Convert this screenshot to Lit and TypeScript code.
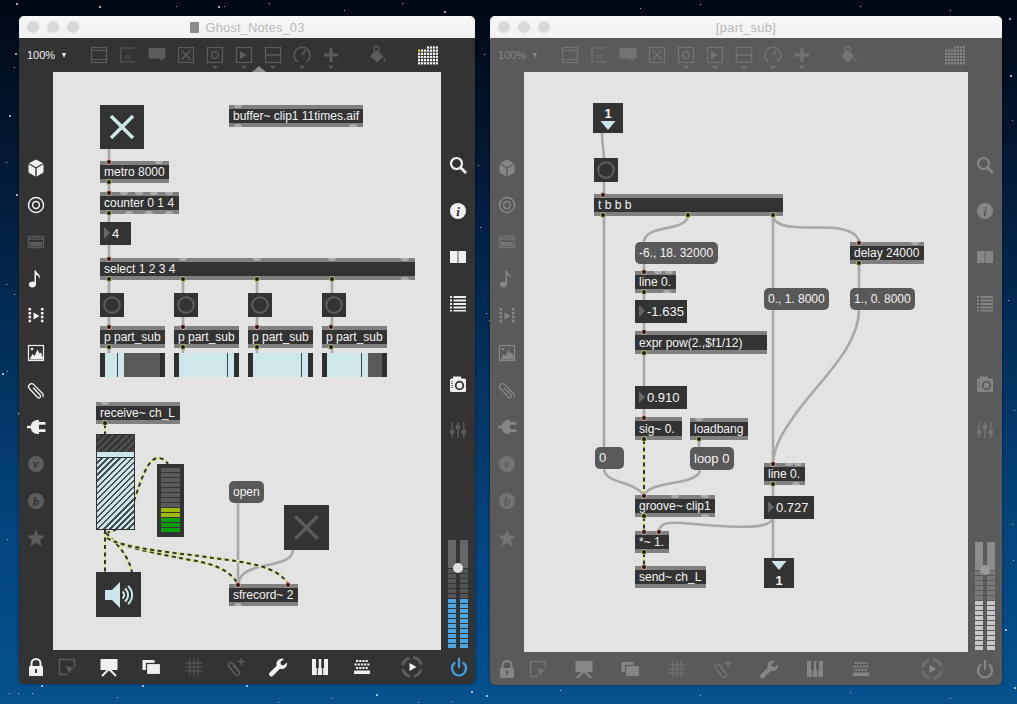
import { LitElement, html, css, svg } from "lit";
import { customElement, property } from "lit/decorators.js";

type Obj = { k: string; x: number; y: number; w: number; h: number; t?: string; fs?: number; it?: number[]; ft?: number[]; ob?: number[]; fb?: number[]; segs?: [number, string][]; line?: number; dim?: boolean };
type Cable = { d: string; sig?: boolean };

const box = (x: number, y: number, w: number, t: string, o: Partial<Obj> = {}): Obj => ({ k: "box", x, y, w, h: 22, t, ...o });
const msg = (x: number, y: number, w: number, t: string, fs = 12, h = 22): Obj => ({ k: "msg", x, y, w, h, t, fs });
const num = (x: number, y: number, w: number, t: string): Obj => ({ k: "num", x, y, w, h: 23, t, fs: 13 });
const btn = (x: number, y: number): Obj => ({ k: "btn", x, y, w: 24, h: 24 });
const tab = (x: number, segs: [number, string][], line: number): Obj => ({ k: "tab", x, y: 353, w: 65, h: 24, segs, line });
const c = (d: string, sig = false): Cable => ({ d, sig });

const D = "dark", L = "light", G = "grey";

const OBJS_1: Obj[] = [
  { k: "toggle", x: 100, y: 105, w: 44, h: 44 },
  box(229, 105, 134, "buffer~ clip1 11times.aif", { ft: [9], fb: [9, 124] }),
  box(100, 161, 69, "metro 8000", { it: [9], ob: [9], ft: [59] }),
  box(100, 192, 79, "counter 0 1 4", { it: [9], ft: [24, 39, 54, 69], ob: [9], fb: [29, 49, 69] }),
  num(100, 222, 31, "4"),
  box(100, 258, 315, "select 1 2 3 4", { it: [9], ft: [83, 157, 232, 305], ob: [9, 83, 157, 232], fb: [305] }),
  ...[100, 174, 248, 322].map((x) => btn(x, 293)),
  ...[100, 174, 248, 322].map((x) => box(x, 326, 65, "p part_sub", { it: [9], ob: [9] })),
  tab(100, [[5, D], [19, L], [36, G], [5, D]], 17),
  tab(174, [[5, D], [55, L], [5, D]], 53),
  tab(248, [[5, D], [55, L], [5, D]], 53),
  tab(322, [[5, D], [41, L], [14, G], [5, D]], 39),
  box(96, 402, 84, "receive~ ch_L", { ft: [9], ob: [9] }),
  { k: "gain", x: 96, y: 434, w: 39, h: 96 },
  { k: "meter", x: 157, y: 464, w: 27, h: 73 },
  msg(229, 481, 35, "open"),
  { k: "toggle", x: 284, y: 505, w: 45, h: 45, dim: true },
  { k: "dac", x: 96, y: 572, w: 45, h: 45 },
  box(229, 584, 69, "sfrecord~ 2", { it: [9, 59], fb: [9] }),
];

const CABLES_1: Cable[] = [
  c("M109 149V161"), c("M109 183V192"), c("M109 214V222"), c("M109 245V258"),
  ...[109, 183, 257, 332].map((x) => c(`M${x} 280V293`)),
  ...[109, 183, 257, 332].map((x) => c(`M${x} 317V326`)),
  ...[109, 183, 257, 332].map((x) => c(`M${x} 348V356`)),
  c("M238 503V584"),
  c("M293 550C292 565 265 563 250 570C243 573 239 578 238 584"),
  c("M105 424V434", true),
  c("M106 533C125 530 130 510 135 498C141 480 148 458 158 458C163 458 166 461 168 464", true),
  c("M105 530V572", true),
  c("M106 533C118 545 128 555 132 572", true),
  c("M107 538C125 548 160 554 180 558C200 562 226 564 238 584", true),
  c("M107 538C125 549 180 553 213 558C245 562 278 566 288 584", true),
];

const OBJS_2: Obj[] = [
  { k: "inlet", x: 593, y: 103, w: 30, h: 30, t: "1" },
  btn(594, 158),
  box(594, 194, 189, "t b b b", { it: [9], ob: [9, 94, 179] }),
  msg(635, 242, 83, "-6., 18. 32000"),
  box(850, 242, 74, "delay 24000", { it: [9], ft: [65], ob: [9] }),
  box(635, 271, 41, "line 0.", { it: [9], ft: [23, 34], ob: [9], fb: [32] }),
  num(635, 300, 52, "-1.635"),
  msg(764, 288, 65, "0., 1. 8000"),
  msg(850, 288, 65, "1., 0. 8000"),
  box(635, 331, 132, "expr pow(2.,$f1/12)", { it: [9], ob: [9], h: 23 }),
  num(635, 386, 52, "0.910"),
  box(635, 417, 47, "sig~ 0.", { it: [9], ob: [9], h: 23 }),
  box(690, 418, 58, "loadbang", { ft: [9], ob: [9] }),
  msg(595, 447, 29, "0", 13),
  msg(690, 447, 44, "loop 0", 13, 23),
  box(764, 463, 41, "line 0.", { it: [9], ft: [25, 34], ob: [9], fb: [32] }),
  num(764, 496, 50, "0.727"),
  box(635, 495, 80, "groove~ clip1", { it: [9], ft: [40, 70], ob: [9], fb: [70] }),
  box(635, 531, 34, "*~ 1.", { it: [9, 24], ob: [9] }),
  box(635, 566, 71, "send~ ch_L", { it: [9] }),
  { k: "outlet", x: 764, y: 558, w: 30, h: 30, t: "1" },
];

const CABLES_2: Cable[] = [
  c("M602 133C602 145 604 150 604 158"), c("M604 182V194"), c("M604 216V447"),
  c("M604 469C605 484 632 480 644 495"),
  c("M688 216C686 232 645 224 644 242"),
  c("M773 216V463"),
  c("M773 216C775 232 815 226 835 228C850 230 858 234 859 242"),
  c("M644 264V271"), c("M644 293V300"), c("M644 323V331"), c("M644 354V386"), c("M644 409V417"),
  c("M699 440V447"), c("M700 470C698 486 650 480 644 495"),
  c("M859 264V288"),
  c("M859 310C859 345 823 378 800 408C785 428 774 445 773 463"),
  c("M773 485V496"),
  c("M773 518C770 530 735 527 705 525C680 523 660 519 659 531"),
  c("M773 518V558"),
  c("M644 440V495", true), c("M644 517V531", true), c("M644 553V566", true),
];

const frame = svg`<rect x="4.5" y="4.5" width="15" height="15" fill="none" stroke="currentColor" stroke-width="1.2"/>`;
const ICONS: Record<string, unknown> = {
  cube: svg`<path fill="currentColor" d="M12 3.5l7 3.8-7 3.9-7-3.9zM4.5 8.3l6.8 3.9v8.3l-6.8-4zM19.5 8.3l-6.8 3.9v8.3l6.8-4z"/>`,
  target: svg`<g fill="none" stroke="currentColor" stroke-width="1.5"><circle cx="12" cy="12" r="7.5"/><circle cx="12" cy="12" r="3.4"/></g>`,
  bar: svg`<g fill="none" stroke="currentColor" stroke-width="1.3"><path d="M4.5 6.5h15v11h-15zM4.5 9h15"/></g><rect x="6" y="12" width="12" height="4" fill="currentColor"/>`,
  note: svg`<path fill="currentColor" d="M10.5 3.5h1.5c.4 3 5 3.8 4 8.6-.7-2.300-2.200-3.500-4-4V17.500a3.600 3 0 1 1-1.500-2.400z"/>`,
  playbar: svg`<path fill="currentColor" d="M9.500 8.500l6 3.500-6 3.500zM4.500 4h2.600v2.500H4.500zM4.500 7.900h2.600v2.500H4.500zM4.500 11.800h2.600v2.500H4.500zM4.500 15.700h2.600v2.500H4.500zM16.900 4h2.600v2.500h-2.600zM16.900 7.900h2.600v2.500h-2.600zM16.900 11.800h2.600v2.500h-2.600zM16.900 15.700h2.600v2.500h-2.600z"/>`,
  image: svg`<rect x="4.500" y="4.500" width="15" height="15" fill="none" stroke="currentColor" stroke-width="1.200"/><path fill="currentColor" d="M5.500 18.500l3-5.500 2 2 3-6.500 2 4 1.500-1 2.500 7z"/><circle cx="8" cy="8" r="1.300" fill="currentColor"/>`,
  clip: svg`<path fill="none" stroke="currentColor" stroke-width="1.300" d="M9 9.500l7.200 7.700a1.700 1.700 0 0 1-2.500 2.300L5.500 10.800a3 3 0 0 1 4.300-4.200L18.500 15.500a3.800 3.800 0 0 1 .5 3.500"/>`,
  plug: svg`<path fill="currentColor" d="M3 10.800h3.800a6.500 6.500 0 0 1 6.400-5.800H15v14h-1.800a6.500 6.500 0 0 1-6.400-5.800H3zM15 7h6.500v2.800H15zM15 14.200h6.500V17H15z"/>`,
  vst: svg`<circle cx="12" cy="12" r="8" fill="currentColor"/><text x="12" y="16" text-anchor="middle" class="glyph" fill="var(--bar)">v</text>`,
  bp: svg`<circle cx="12" cy="12" r="8" fill="currentColor"/><text x="12" y="16.500" text-anchor="middle" class="glyph" fill="var(--bar)">b</text>`,
  star: svg`<path fill="currentColor" d="M12 3.500l2.500 5.700 6.200.6-4.700 4.100 1.400 6.100-5.400-3.200-5.400 3.200 1.400-6.100-4.700-4.100 6.200-.6z"/>`,
  search: svg`<circle cx="10.500" cy="10.500" r="5.500" fill="none" stroke="currentColor" stroke-width="2.200"/><path d="M14.500 14.500l5.500 5.500" stroke="currentColor" stroke-width="2.800"/>`,
  info: svg`<circle cx="12" cy="12" r="8" fill="currentColor"/><text x="12" y="17" text-anchor="middle" class="glyph" fill="var(--bar)">i</text>`,
  book: svg`<path fill="currentColor" d="M4 6h7.600v12H4zM12.400 6H20v12h-7.600z"/>`,
  list: svg`<path fill="currentColor" d="M4 5h2v2H4zM7.500 5H20v2H7.500zM4 8.500h2v2H4zM7.500 8.500H20v2H7.500zM4 12h2v2H4zM7.500 12H20v2H7.500zM4 15.500h2v2H4zM7.500 15.500H20v2H7.500zM4 19h2v1.500H4zM7.500 19H20v1.500H7.500z"/>`,
  camera: svg`<rect x="4" y="6.500" width="16" height="13.500" rx="1.500" fill="currentColor"/><rect x="7" y="4.500" width="8" height="3" fill="currentColor"/><circle cx="13.500" cy="13.500" r="3.800" fill="none" stroke="var(--bar)" stroke-width="1.800"/><path d="M6 9v8" stroke="var(--bar)" stroke-width="1.200" stroke-dasharray="1 1"/>`,
  mixer: svg`<path fill="currentColor" d="M5.500 4h1.400v16H5.500zM11.300 4h1.400v16h-1.400zM17.100 4h1.400v16h-1.400zM4 12h4.400v4H4zM9.800 7h4.400v4H9.800zM15.600 12H20v4h-4.400z"/>`,
  power: svg`<path fill="none" stroke="currentColor" stroke-width="2.300" stroke-linecap="round" d="M7.500 8a7 7 0 1 0 9 0M12 4v8"/>`,
  lock: svg`<path fill="none" stroke="currentColor" stroke-width="2" d="M7.500 11V8.500a4.500 4.500 0 0 1 9 0V11"/><rect x="5" y="11" width="14" height="10" rx="1" fill="currentColor"/><rect x="11" y="14" width="2" height="4" fill="var(--bar)"/>`,
  cursor: svg`<path fill="none" stroke="currentColor" stroke-width="1.500" d="M12 19.500H4.500v-15h15V12"/><path fill="currentColor" d="M10.500 10.500l9 3-3.500 1.500-1.500 4z"/>`,
  present: svg`<rect x="3.500" y="4" width="17" height="11" fill="currentColor"/><path stroke="currentColor" stroke-width="2" d="M12 14L5 21M12 14l7 7"/>`,
  windows: svg`<rect x="3.500" y="5" width="12" height="10" fill="currentColor"/><rect x="7.500" y="8.500" width="14" height="11" fill="currentColor" stroke="var(--bar)" stroke-width="1.200"/>`,
  grid: svg`<path stroke="currentColor" stroke-width="1" fill="none" d="M8 3.500v17M12 3.500v17M16 3.500v17M3.500 8h17M3.500 12h17M3.500 16h17"/>`,
  clipplus: svg`<path fill="none" stroke="currentColor" stroke-width="1.500" d="M16 18L9 8.500a2.500 2.500 0 0 0-4 3L11.500 20a2.500 2.500 0 0 0 4-2.500L9 10"/><path stroke="currentColor" stroke-width="1.500" d="M17 3v7M13.500 6.500h7"/>`,
  wrench: svg`<path fill="currentColor" d="M21 7.500l-3.500 3-2.500-.8-.6-2.500L18 4a5.500 5.500 0 0 0-7.300 6.700L3.700 17.500a2.300 2.300 0 0 0 3.300 3.300l6.900-7A5.500 5.500 0 0 0 21 7.500z"/>`,
  piano: svg`<rect x="4" y="4" width="16" height="16" fill="currentColor"/><path stroke="var(--bar)" stroke-width="1" d="M9.300 12v8M14.700 12v8"/><path fill="var(--bar)" d="M8 4h2.800v9H8zM13.200 4H16v9h-2.800z"/>`,
  keys: svg`<path fill="currentColor" d="M6 5h2.200v2H6zM9.200 5h2.200v2H9.200zM12.400 5h2.200v2h-2.200zM15.600 5h2.200v2h-2.200zM4.500 8.500h2.200v2H4.500zM7.700 8.500h2.200v2H7.700zM10.900 8.500h2.200v2h-2.200zM14.100 8.500h2.200v2h-2.200zM17.300 8.500h2.200v2h-2.200zM6 12h2.200v2H6zM9.200 12h2.200v2H9.200zM12.400 12h2.200v2h-2.200zM15.600 12h2.200v2h-2.200zM4 15.500h16v3.500H4z"/>`,
  dial: svg`<g fill="none" stroke="var(--dim)" stroke-width="3"><path d="M13 2.600a9.500 9.500 0 0 1 8.200 7M21 14.500a9.500 9.500 0 0 1-7.500 7M10 21.300a9.500 9.500 0 0 1-7.300-7.300M2.800 10A9.500 9.500 0 0 1 9.500 3"/></g><path fill="var(--on)" d="M9.500 8l7 4-7 4z"/>`,
  patcher: svg`${frame}<path stroke="currentColor" stroke-width="1.200" d="M4.500 7.500h15M4.500 16.500h15"/>`,
  msgbox: svg`<path fill="none" stroke="currentColor" stroke-width="1.200" d="M19 5H5v14h14"/><text x="12" y="16" text-anchor="middle" class="mini" fill="currentColor">m</text>`,
  comment: svg`<path fill="currentColor" d="M3.500 5h17v10.500h-3v3l-3.500-3H3.500z"/>`,
  xbox: svg`${frame}<path stroke="currentColor" stroke-width="1.500" d="M7.500 7.500l9 9M16.500 7.500l-9 9"/>`,
  ringbox: svg`${frame}<circle cx="12" cy="12" r="3.500" fill="none" stroke="currentColor" stroke-width="1.500"/>`,
  playbox: svg`${frame}<path fill="currentColor" d="M8 8l7 4-7 4z"/>`,
  sliderbox: svg`${frame}<path stroke="currentColor" stroke-width="1.500" d="M4.500 12h15"/>`,
  dialsm: svg`<path fill="none" stroke="currentColor" stroke-width="1.500" d="M7.500 18.800a8 8 0 1 1 9 0M12 12l3.500-5"/>`,
  plus: svg`<path stroke="currentColor" stroke-width="3" d="M12 5v14M5 12h14"/>`,
  paint: svg`<path fill="currentColor" d="M11.500 7l7 6.500-6.500 6-7-6.500zM19.500 15c1.500 2 1.500 3.500 0 3.500s-1.500-1.500 0-3.500z"/><path fill="none" stroke="currentColor" stroke-width="1.300" d="M9 10V6a2.500 2.500 0 0 1 5 0v3"/>`,
};

const icon = (n: string) => html`<svg class="ic" viewBox="0 0 24 24">${ICONS[n]}</svg>`;

const dotsGrid = svg`${Array.from({ length: 6 }, (_, r) =>
  Array.from({ length: 7 }, (_, col) => {
    if (r === 0 && col < 3) return null;
    return svg`<rect x=${col * 3} y=${r * 3.2} width="2.200" height="2.300" fill=${r === 1 && col === 0 ? "var(--accent)" : "var(--dots)"}/>`;
  })
)}`;

@customElement("max-window")
class MaxWindow extends LitElement {
  @property({ attribute: false }) data: any = {};
  static styles = css`
    :host {
      position: absolute;
      display: flex;
      flex-direction: column;
      box-sizing: border-box;
      font-family: "Liberation Sans", Arial, sans-serif;
      border-radius: 5px;
      overflow: hidden;
      --bar: #333333;
      --on: #f0f0f0;
      --off: #5c5c5c;
      --dim: #5c5c5c;
      --power: #3d9ee0;
      --accent: #d8d820;
      --dots: #f0f0f0;
      --knob: #e0e0e0;
      --solid: #666666;
      --seg: #555555;
      --lit: #4aa6e6;
      --g1: 7px;
      --g2: 18.2px;
      --g3: 26px;
      --g4: 23px;
      --foot: 34px;
      --track: 0.1px;
      background: var(--bar);
      box-shadow: 0 0 3px rgba(0, 0, 0, 0.5);
    }
    :host(.w2) {
      --bar: #5a5a5a;
      --on: #868686;
      --off: #747474;
      --dim: #707070;
      --power: #868686;
      --accent: #808080;
      --dots: #868686;
      --knob: #9a9a9a;
      --solid: #8c8c8c;
      --seg: #7a7a7a;
      --lit: #c8c8c8;
      --g1: 7px;
      --g2: 22.2px;
      --g3: 47px;
      --g4: 29px;
      --foot: 33px;
      --track: 0.25px;
    }
    .ic { width: 24px; height: 24px; display: block; }
    .glyph { font: italic bold 13px "Liberation Serif", serif; }
    .mini { font: italic 9px "Liberation Serif", serif; }
    .title {
      height: 22px;
      flex: none;
      display: grid;
      grid-template-columns: 1fr auto 1fr;
      align-items: center;
      background: linear-gradient(#f8f8f8, #f1f1f1);
      color: #b9b9b9;
      font-size: 13px;
    }
    .lights { display: flex; gap: 8px; margin-left: 8px; }
    .lights i { width: 12px; height: 12px; border-radius: 50%; background: #d9d9d9; display: block; }
    .name { display: flex; align-items: center; gap: 7px; letter-spacing: var(--track); }
    .doc { width: 9px; height: 11px; background: #8c8c8c; border-radius: 1px; display: block; }
    .toolbar {
      height: 34px;
      flex: none;
      display: flex;
      position: relative;
      color: var(--off);
    }
    .zoom {
      width: 65.5px;
      box-sizing: border-box;
      padding: 11px 0 0 8px;
      font-size: 11px;
      line-height: 13px;
      color: var(--on);
      display: flex;
      gap: 7px;
    }
    .zoom i {
      display: block;
      margin-top: 4px;
      width: 0;
      height: 0;
      border-left: 2.500px solid transparent;
      border-right: 2.500px solid transparent;
      border-top: 5px solid var(--on);
    }
    .tool {
      width: 29px;
      flex: none;
      position: relative;
      display: flex;
      justify-content: center;
      padding-top: 5px;
      box-sizing: border-box;
    }
    .tool.drop::after {
      content: "";
      position: absolute;
      top: 28px;
      left: 11.500px;
      border-left: 3px solid transparent;
      border-right: 3px solid transparent;
      border-top: 3px solid var(--off);
    }
    .paint { margin-left: 17px; }
    .dots { margin-left: auto; padding: 8px 37px 0 0; }
    .dots svg { width: 20px; height: 19px; display: block; }
    .notch {
      position: absolute;
      left: 233px;
      bottom: 0;
      border-left: 7px solid transparent;
      border-right: 7px solid transparent;
      border-bottom: 6px solid #8c8c8c;
    }
    .mid { flex: 1; display: flex; min-height: 0; }
    .rail { width: 34px; flex: none; display: flex; flex-direction: column; align-items: center; color: var(--off); }
    .rail.left { padding-top: 77px; }
    .rail.left .cell { height: 37px; }
    .rail.right { padding-top: 70px; }
    .rail.right .cell { height: 46px; }
    .cell { display: flex; align-items: center; justify-content: center; flex: none; }
    .on { color: var(--on); }
    .camera { margin-top: 35px; }
    .meter {
      margin-top: auto;
      margin-bottom: 2px;
      position: relative;
      display: flex;
      gap: 4px;
    }
    .col { width: 8px; display: flex; flex-direction: column; gap: 1px; }
    .solid { height: 28px; background: var(--solid); }
    .seg { height: 4px; background: var(--seg); }
    .seg.lit { background: var(--lit); }
    .knob {
      position: absolute;
      left: 5px;
      top: 23px;
      width: 10px;
      height: 10px;
      border-radius: 50%;
      background: var(--knob);
    }
    .canvas { flex: 1; background: #e3e3e3; position: relative; }
    .cables { position: absolute; left: 0; top: 0; width: 100%; height: 100%; }
    .wire { fill: none; stroke: #a8a8a8; stroke-width: 2.600; }
    .sig { fill: none; stroke: #dbe5a2; stroke-width: 3; }
    .sigdash { fill: none; stroke: #333333; stroke-width: 2; stroke-dasharray: 4 3.500; }
    .o {
      position: absolute;
      box-sizing: border-box;
      background: #333333;
      color: #f3f3f3;
      font-size: 12px;
      line-height: 14px;
      display: flex;
      align-items: center;
      padding-left: 4px;
      white-space: nowrap;
    }
    .box { border-top: 4px solid #808080; border-bottom: 4px solid #808080; }
    .msg { background: #595959; border-radius: 5px; }
    .num { padding-left: 12px; font-size: 13px; }
    .num::before {
      content: "";
      position: absolute;
      left: 4px;
      top: 5px;
      border-top: 6.500px solid transparent;
      border-bottom: 6.500px solid transparent;
      border-left: 6px solid #666666;
    }
    .p { position: absolute; box-sizing: border-box; display: block; }
    .pi, .po { width: 6px; height: 6px; border-radius: 50%; background: #1f1f1f; }
    .pi { top: -6px; border: 1px solid #e0a59c; }
    .po { bottom: -6px; border: 1px solid #b9c566; }
    .ft, .fb { width: 8px; height: 3px; background: #ababab; }
    .ft { top: -4px; border-radius: 0 0 4px 4px; }
    .fb { bottom: -4px; border-radius: 4px 4px 0 0; }
    .graphic { padding: 0; justify-content: center; }
    .graphic svg { display: block; width: 100%; height: 100%; }
    .tab { background: none; padding: 0; align-items: stretch; }
    .dark { background: #2f2f2f; }
    .light { background: #cfe6ea; }
    .grey { background: #595959; }
    .tabline { position: absolute; top: 0; bottom: 0; width: 1px; background: #2f4a50; }
    .gain { flex-direction: column; align-items: stretch; padding: 0; border: 1px solid #333333; background: #333333; }
    .gtop {
      height: 17px;
      flex: none;
      background: repeating-linear-gradient(135deg, #4c4c4c 0 3px, #333333 3px 5px);
    }
    .gstrip { height: 5px; flex: none; background: #cde5e8; border-bottom: 1px solid #333333; }
    .gbody {
      flex: 1;
      background: repeating-linear-gradient(135deg, #cfe4e6 0 2.600px, #3f5053 2.600px 4.300px);
    }
    .vu { flex-direction: column; align-items: stretch; gap: 1px; padding: 3.500px 4px 0; }
    .vu i { height: 4px; display: block; background: #5a5a5a; }
    .vu i.y { background: #a0b800; }
    .vu i.g { background: #0ba00b; }
    .port-note { font-weight: 700; font-size: 13px; }
    .foot {
      height: var(--foot);
      flex: none;
      display: flex;
      align-items: center;
      padding-left: 5px;
      color: var(--off);
    }
    .foot .ic { flex: none; }
    .gap1 { margin-left: var(--g1); }
    .gap2 { margin-left: var(--g2); }
    .gap3 { margin-left: var(--g3); }
    .gap4 { margin-left: var(--g4); }
    .pw { color: var(--power); }
  `;

  private renderObj(o: Obj, ox: number, oy: number) {
    const geo = `left:${o.x - ox}px;top:${o.y - oy}px;width:${o.w}px;height:${o.h}px;`;
    const size = o.fs ? `font-size:${o.fs}px;` : "";
    switch (o.k) {
      case "box":
        return html`<div class="o box" style=${geo}>${o.t}
          ${(o.it ?? []).map((x) => html`<i class="p pi" style="left:${x - 3}px"></i>`)}
          ${(o.ft ?? []).map((x) => html`<i class="p ft" style="left:${x - 4}px"></i>`)}
          ${(o.ob ?? []).map((x) => html`<i class="p po" style="left:${x - 3}px"></i>`)}
          ${(o.fb ?? []).map((x) => html`<i class="p fb" style="left:${x - 4}px"></i>`)}
        </div>`;
      case "msg":
        return html`<div class="o msg" style=${geo + size}>${o.t}</div>`;
      case "num":
        return html`<div class="o num" style=${geo}>${o.t}</div>`;
      case "btn":
        return html`<div class="o graphic" style=${geo}>
          <svg viewBox="0 0 24 24"><circle cx="12" cy="12" r="7.800" fill="none" stroke="#5e5e5e" stroke-width="2"/></svg>
        </div>`;
      case "toggle":
        return html`<div class="o graphic" style=${geo}>
          <svg viewBox="0 0 44 44"><path d="M11 11l22 22M33 11L11 33" fill="none" stroke=${o.dim ? "#5a5a5a" : "#cde6e3"} stroke-width="3.600"/></svg>
        </div>`;
      case "tab":
        return html`<div class="o tab" style=${geo}>
          ${(o.segs ?? []).map(([w, cl]) => html`<span class=${cl} style="width:${w}px"></span>`)}
          <span class="tabline" style="left:${o.line}px"></span>
        </div>`;
      case "gain":
        return html`<div class="o gain" style=${geo}><div class="gtop"></div><div class="gstrip"></div><div class="gbody"></div></div>`;
      case "meter":
        return html`<div class="o vu" style=${geo}>
          ${["", "", "", "", "", "", "", "", "y", "y", "g", "g", "g"].map((cl) => html`<i class=${cl}></i>`)}
        </div>`;
      case "dac":
        return html`<div class="o graphic" style=${geo}>
          <svg viewBox="0 0 45 45">
            <path fill="#cde5e8" d="M9 18h7l8-8v26l-8-8H9z"/>
            <path fill="none" stroke="#cde5e8" stroke-width="2" d="M26.500 19.500a4.500 4.500 0 0 1 0 7M29 16.500a8.500 8.500 0 0 1 0 13M32 14a12 12 0 0 1 0 18"/>
          </svg>
        </div>`;
      case "inlet":
        return html`<div class="o graphic port-note" style=${geo}>
          <svg viewBox="0 0 30 30">
            <text x="15" y="15" text-anchor="middle" fill="#f3f3f3" style="font:700 13px 'Liberation Sans',sans-serif">${o.t}</text>
            <path d="M7.500 18h15L15 27z" fill="#cde5e8"/>
          </svg>
        </div>`;
      case "outlet":
        return html`<div class="o graphic port-note" style=${geo}>
          <svg viewBox="0 0 30 30">
            <path d="M7.500 3h15L15 12z" fill="#cde5e8"/>
            <text x="15" y="27" text-anchor="middle" fill="#f3f3f3" style="font:700 13px 'Liberation Sans',sans-serif">${o.t}</text>
          </svg>
        </div>`;
    }
    return null;
  }

  render() {
    const d = this.data;
    const col = (lit: number) => html`<div class="col">
      <div class="solid"></div>
      ${Array.from({ length: 6 }, () => html`<div class="seg"></div>`)}
      ${Array.from({ length: lit }, () => html`<div class="seg lit"></div>`)}
    </div>`;
    return html`
      <div class="title">
        <div class="lights"><i></i><i></i><i></i></div>
        <div class="name">${d.doc ? html`<i class="doc"></i>` : null}<span>${d.title}</span></div>
        <div></div>
      </div>
      <div class="toolbar">
        <div class="zoom"><span>100%</span><i></i></div>
        ${[
          ["patcher", 0], ["msgbox", 0], ["comment", 0], ["xbox", 0], ["ringbox", 1],
          ["playbox", 1], ["sliderbox", 1], ["dialsm", 1], ["plus", 1],
        ].map(([n, drop]) => html`<div class="tool ${drop ? "drop" : ""}">${icon(n as string)}</div>`)}
        <div class="tool paint">${icon("paint")}</div>
        <div class="dots"><svg viewBox="0 0 20.200 18.500">${dotsGrid}</svg></div>
        ${d.notch ? html`<div class="notch"></div>` : null}
      </div>
      <div class="mid">
        <div class="rail left">
          ${[
            ["cube", 1], ["target", 1], ["bar", 0], ["note", 1], ["playbar", 1], ["image", 1],
            ["clip", 1], ["plug", 1], ["vst", 0], ["bp", 0], ["star", 0],
          ].map(([n, on]) => html`<div class="cell ${on ? "on" : ""}">${icon(n as string)}</div>`)}
        </div>
        <div class="canvas">
          <svg class="cables" viewBox="${d.ox} ${d.oy} ${d.cw} ${d.ch}">
            ${d.cables.map((k: Cable) =>
              k.sig
                ? svg`<path class="sig" d=${k.d}/><path class="sigdash" d=${k.d}/>`
                : svg`<path class="wire" d=${k.d}/>`
            )}
          </svg>
          ${d.objs.map((o: Obj) => this.renderObj(o, d.ox, d.oy))}
        </div>
        <div class="rail right">
          ${["search", "info", "book", "list"].map((n) => html`<div class="cell on">${icon(n)}</div>`)}
          <div class="cell on camera">${icon("camera")}</div>
          <div class="cell">${icon("mixer")}</div>
          <div class="meter">${col(10)}${col(10)}<i class="knob"></i></div>
        </div>
      </div>
      <div class="foot">
        <span class="on">${icon("lock")}</span>
        <span class="gap1">${icon("cursor")}</span>
        <span class="on gap2">${icon("present")}</span>
        <span class="on gap2">${icon("windows")}</span>
        <span class="gap2">${icon("grid")}</span>
        <span class="gap2">${icon("clipplus")}</span>
        <span class="on gap2">${icon("wrench")}</span>
        <span class="on gap2">${icon("piano")}</span>
        <span class="on gap2">${icon("keys")}</span>
        <span class="gap3">${icon("dial")}</span>
        <span class="pw gap4">${icon("power")}</span>
      </div>
    `;
  }
}

const STARS: [number, number, number][] = [
  [16, 3, 2], [99, 6, 2], [176, 6, 1], [218, 6, 2], [224, 6, 1], [269, 3, 1], [344, 10, 1], [402, 3, 1], [444, 11, 2],
  [15, 53, 2], [14, 67, 1], [9, 115, 2], [6, 162, 1], [16, 194, 2], [6, 284, 1], [14, 294, 1], [2, 373, 2], [7, 371, 1],
  [18, 412, 3], [7, 539, 1], [484, 54, 1], [480, 227, 1], [486, 313, 1], [489, 320, 1], [478, 165, 1],
  [9, 693, 1], [18, 693, 1], [32, 693, 1], [117, 697, 1], [41, 685, 2], [142, 685, 2], [246, 685, 2], [376, 694, 2],
  [332, 698, 1], [471, 691, 2], [486, 695, 2], [452, 701, 1], [418, 702, 1], [278, 702, 1],
  [1009, 18, 2], [1010, 75, 2], [1012, 524, 1], [1013, 560, 1], [1005, 629, 2], [1014, 687, 2], [1012, 120, 1],
  [1008, 300, 1], [1014, 410, 1], [560, 690, 1], [700, 695, 1], [850, 692, 1], [950, 698, 1], [640, 8, 1], [700, 4, 1], [860, 6, 1], [950, 10, 1],
];

const W1 = { title: "Ghost_Notes_03", doc: true, notch: true, ox: 53, oy: 72, cw: 388, ch: 578, objs: OBJS_1, cables: CABLES_1 };
const W2 = { title: "[part_sub]", doc: false, notch: false, ox: 524, oy: 72, cw: 444, ch: 580, objs: OBJS_2, cables: CABLES_2 };

@customElement("app-root")
export class AppRoot extends LitElement {
  static styles = css`
    :host {
      display: block;
      position: relative;
      width: 1017px;
      height: 704px;
      overflow: hidden;
      background: linear-gradient(#010814 0%, #021a38 25%, #02305c 50%, #03447c 75%, #05528f 100%);
    }
    .star { position: absolute; background: #ffffff; border-radius: 50%; opacity: 0.85; }
    .w1 { left: 19px; top: 16px; width: 456px; height: 668px; }
    .w2 { left: 490px; top: 16px; width: 512px; height: 669px; }
  `;
  render() {
    return html`
      ${STARS.map(([x, y, s]) => html`<i class="star" style="left:${x}px;top:${y}px;width:${s}px;height:${s}px"></i>`)}
      <max-window class="w1" .data=${W1}></max-window>
      <max-window class="w2" .data=${W2}></max-window>
    `;
  }
}
